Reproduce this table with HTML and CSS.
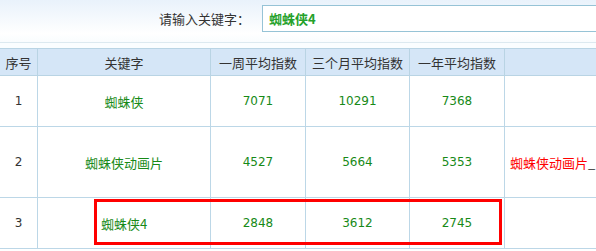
FILE: index.html
```html
<!DOCTYPE html>
<html lang="zh">
<head>
<meta charset="utf-8">
<link rel="stylesheet" href="styles.css">
</head>
<body>
<div class="search-bar">
  <label class="search-label">请输入关键字：</label>
  <div class="search-input">蜘蛛侠4</div>
</div>
<div class="spacer"></div>
<div class="grid">
  <div class="cell head">序号</div>
  <div class="cell head">关键字</div>
  <div class="cell head">一周平均指数</div>
  <div class="cell head">三个月平均指数</div>
  <div class="cell head">一年平均指数</div>
  <div class="cell head"></div>

  <div class="cell idx">1</div>
  <div class="cell kw">蜘蛛侠</div>
  <div class="cell num">7071</div>
  <div class="cell num">10291</div>
  <div class="cell num">7368</div>
  <div class="cell"></div>

  <div class="cell idx">2</div>
  <div class="cell kw">蜘蛛侠动画片</div>
  <div class="cell num">4527</div>
  <div class="cell num">5664</div>
  <div class="cell num">5353</div>
  <div class="cell extra"><span class="hit">蜘蛛侠动画片</span>_</div>

  <div class="cell idx">3</div>
  <div class="cell kw">蜘蛛侠4</div>
  <div class="cell num">2848</div>
  <div class="cell num">3612</div>
  <div class="cell num">2745</div>
  <div class="cell"></div>

  <div class="highlight"></div>
</div>
</body>
</html>
```

FILE: styles.css
```css
html, body {
  margin: 0;
  padding: 0;
  overflow: hidden;
  background: #ffffff;
}
body {
  width: 596px;
  height: 251px;
  font-family: "Noto Sans CJK SC", sans-serif;
  font-size: 13px;
  color: #333333;
}
.search-bar {
  height: 43px;
  box-sizing: border-box;
  padding: 5px 0 0 159px;
  display: flex;
  align-items: flex-start;
  gap: 12px;
  background: linear-gradient(#e9f2fb, #ffffff 80%, #f9fcfe);
  border-bottom: 1px solid #dce9f0;
  white-space: nowrap;
}
.search-label {
  line-height: 27px;
  height: 27px;
  color: #333333;
  font-size: 13px;
}
.search-input {
  width: 420px;
  height: 27px;
  box-sizing: border-box;
  border: 1px solid #96c3d6;
  background: #ffffff;
  padding-left: 6px;
  line-height: 25px;
  font-weight: bold;
  color: #24a12a;
  flex-shrink: 0;
}
.spacer {
  height: 5px;
  background: #fafdff;
}
.grid {
  position: relative;
  display: grid;
  grid-template-columns: 38px 173px 95px 104px 95px 240px;
  grid-template-rows: 27px 51px 71px 51px;
  width: 745px;
  border-top: 1px solid #b9d4e4;
}
.cell {
  box-sizing: border-box;
  border-right: 1px solid #bcd7e7;
  border-bottom: 1px solid #bcd7e7;
  display: flex;
  align-items: center;
  justify-content: center;
  white-space: nowrap;
  overflow: hidden;
}
.head {
  background: #d5e6f7;
  color: #333333;
  border-color: #b9d4e4;
}
.idx {
  font-family: "DejaVu Sans", sans-serif;
  font-size: 12px;
  color: #333333;
}
.kw {
  color: #178a17;
}
.num {
  font-family: "DejaVu Sans", sans-serif;
  font-size: 12px;
  color: #178a17;
}
.extra {
  justify-content: flex-start;
  padding-left: 5px;
  color: #333333;
}
.hit {
  color: #ff0000;
}
.highlight {
  position: absolute;
  left: 94px;
  top: 150px;
  width: 408px;
  height: 46px;
  box-sizing: border-box;
  border: 3px solid #ff0000;
  pointer-events: none;
}
```
